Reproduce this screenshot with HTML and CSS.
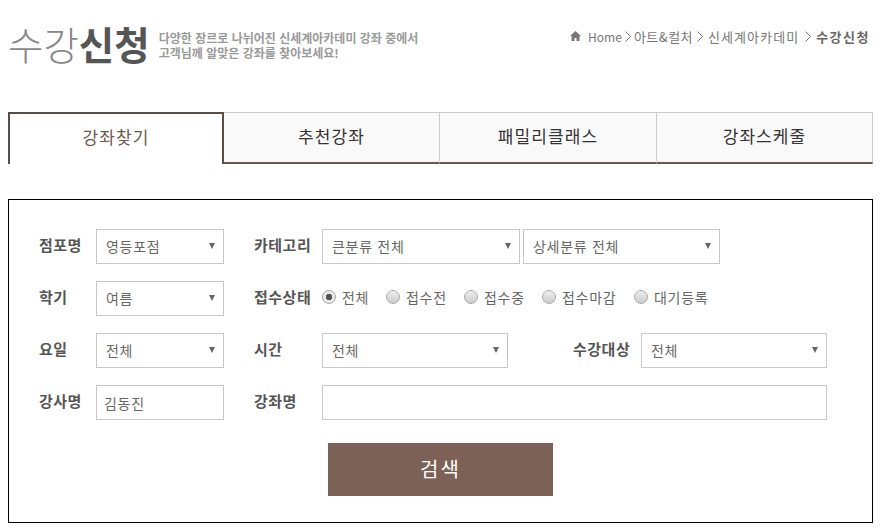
FILE: index.html
```html
<!DOCTYPE html>
<html lang="ko">
<head>
    <meta charset="UTF-8">
    <title>수강신청</title>
    <link rel="stylesheet" href="styles.css">
</head>
<body>
    <div class="header">
        <div class="title-box">
            <h1><span class="light">수강</span>신청</h1>
            <p>다양한 장르로 나뉘어진 신세계아카데미 강좌 중에서<br>고객님께 알맞은 강좌를 찾아보세요!</p>
        </div>
        <div class="crumbs">
            <svg class="home-icon" width="11" height="10" viewBox="0 0 11 10"><path d="M5.5 0 L11 5 L9.5 5 L9.5 10 L6.5 10 L6.5 7 L4.5 7 L4.5 10 L1.5 10 L1.5 5 L0 5 Z" fill="#777"/></svg>
            <span class="home">Home</span>
            <svg class="sep first" width="6" height="11" viewBox="0 0 6 11"><path d="M0.5 0.5 L5.5 5.5 L0.5 10.5" fill="none" stroke="#777"/></svg>
            <span class="art">아트&amp;컬처</span>
            <svg class="sep" width="6" height="11" viewBox="0 0 6 11"><path d="M0.5 0.5 L5.5 5.5 L0.5 10.5" fill="none" stroke="#777"/></svg>
            <span class="academy">신세계아카데미</span>
            <svg class="sep last" width="6" height="11" viewBox="0 0 6 11"><path d="M0.5 0.5 L5.5 5.5 L0.5 10.5" fill="none" stroke="#777"/></svg>
            <b>수강신청</b>
        </div>
    </div>

    <ul class="tabs">
        <li class="active">강좌찾기</li>
        <li>추천강좌</li>
        <li>패밀리클래스</li>
        <li>강좌스케줄</li>
    </ul>

    <form class="search">
        <div class="row">
            <label class="lbl">점포명</label>
            <div class="sel w128"><select><option>영등포점</option></select></div>
            <label class="lbl second">카테고리</label>
            <div class="sel w198"><select><option>큰분류 전체</option></select></div>
            <div class="sel w197 near"><select><option>상세분류 전체</option></select></div>
        </div>
        <div class="row">
            <label class="lbl">학기</label>
            <div class="sel w128"><select><option>여름</option></select></div>
            <label class="lbl second">접수상태</label>
            <div class="radios">
                <label class="r1"><input type="radio" name="st" checked>전체</label>
                <label class="r2"><input type="radio" name="st">접수전</label>
                <label class="r3"><input type="radio" name="st">접수중</label>
                <label class="r4"><input type="radio" name="st">접수마감</label>
                <label class="r5"><input type="radio" name="st">대기등록</label>
            </div>
        </div>
        <div class="row">
            <label class="lbl">요일</label>
            <div class="sel w128"><select><option>전체</option></select></div>
            <label class="lbl second">시간</label>
            <div class="sel w186"><select><option>전체</option></select></div>
            <label class="lbl third">수강대상</label>
            <div class="sel w186"><select><option>전체</option></select></div>
        </div>
        <div class="row">
            <label class="lbl">강사명</label>
            <input class="txt w128" type="text" value="김동진">
            <label class="lbl second">강좌명</label>
            <input class="txt w505" type="text">
        </div>
        <button type="button" class="btn-search">검색</button>
    </form>
</body>
</html>
```

FILE: styles.css
```css
* { box-sizing: border-box; }
body { margin: 0; padding: 0 7px 0 8px; font-family: "Noto Sans CJK KR", "Noto Sans", sans-serif; color: #444; background: #fff; }

.header { display: flex; justify-content: space-between; height: 112px; }
.title-box { display: flex; align-items: flex-start; padding-top: 18px; }
h1 { margin: 0; font-size: 38.5px; line-height: 50px; height: 50px; font-weight: 700; color: #555; }
h1 .light { font-weight: 300; color: #888; }
.title-box p { margin: 12px 0 0 9px; font-size: 12px; line-height: 15px; color: #999; font-weight: 700; }
.crumbs { display: flex; align-items: center; height: 16px; margin-top: 28px; padding-right: 3px; font-size: 13px; letter-spacing: 0.9px; color: #777; }
.crumbs b { color: #666; letter-spacing: 1.5px; }
.crumbs .home { font-size: 12px; letter-spacing: 0; }
.crumbs .art { letter-spacing: 0.5px; }
.crumbs .academy { letter-spacing: 1.05px; }
.sep { margin: 0 5px 0 4px; }
.sep.first { margin: 0 3px 0 3px; }
.sep.last { margin-left: 6px; }
.home-icon { margin-right: 7px; }

.tabs { display: flex; margin: 0; padding: 0; list-style: none; height: 52px; }
.tabs li { width: 216px; height: 52px; line-height: 46px; text-align: center; font-size: 17px; letter-spacing: 1.1px; color: #333; background: #f9f9f9; border-top: 1px solid #ccc; border-right: 1px solid #ccc; border-bottom: 2px solid #6b574f; }
.tabs li:nth-child(3) { width: 217px; }
.tabs li.active { color: #6b5a52; background: #fff; border: 2px solid #5c4c46; border-bottom: 0; }

.search { margin-top: 35px; height: 324px; padding: 29px 29px 0; border: 1px solid #000; }
.row { display: flex; align-items: center; height: 35px; margin-bottom: 17px; }
.lbl { width: 58px; padding: 0 0 5px 1px; font-size: 15px; letter-spacing: 0.5px; font-weight: 700; color: #555; }
.lbl.second { width: 69px; margin-left: 29px; }
.lbl.third { width: 69px; margin-left: 64px; }

.sel { position: relative; height: 35px; }
.sel::after { content: ""; position: absolute; right: 9px; top: 14px; border-left: 3px solid transparent; border-right: 3px solid transparent; border-top: 6px solid #666; }
.sel select { width: 100%; height: 100%; padding: 0 0 2px 9px; appearance: none; background: #fff; border: 1px solid #c8c8c8; border-radius: 0; font-family: inherit; font-size: 14px; letter-spacing: 0.7px; color: #666; }
.near { margin-left: 3px; }
.w128 { width: 128px; }
.w186 { width: 186px; }
.w197 { width: 197px; }
.w198 { width: 198px; }
.w505 { width: 505px; }

.txt { height: 35px; padding: 0 7px; border: 1px solid #c8c8c8; font-family: inherit; font-size: 14px; letter-spacing: 0.7px; color: #666; }

.radios { display: flex; font-size: 14px; letter-spacing: 0.7px; color: #666; padding-bottom: 3px; }
.radios label { display: flex; align-items: center; }
.radios input { appearance: none; width: 14px; height: 14px; margin: 0 6px 0 0; border: 1px solid #aaa; border-radius: 50%; background: linear-gradient(#eee, #ccc); }
.radios input:checked { background: radial-gradient(circle, #555 0 3px, #e8e8e8 3.5px); }
.r1 { width: 64px; }
.r2 { width: 78px; }
.r3 { width: 78px; }
.r4 { width: 92px; }

.btn-search { display: block; width: 225px; height: 53px; margin: 23px 0 0 290px; padding: 0 0 2px; border: 0; background: #7c6156; color: #fff; font-family: inherit; font-size: 20px; letter-spacing: 2px; }
```
